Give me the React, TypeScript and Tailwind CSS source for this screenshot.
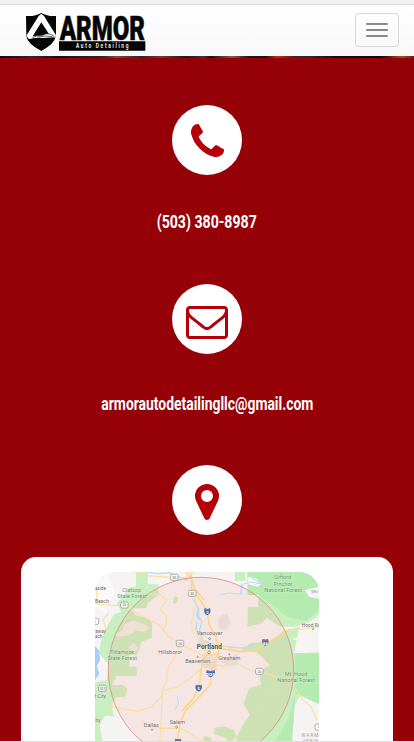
import React from "react";

function Logo() {
  return (
    <svg className="ml-[26px] h-[38px] w-[120px]" viewBox="78 38 360 114" aria-label="Armor Auto Detailing">
      <path d="M78 47Q105 49 124 38Q143 49 168 47V105Q164 132 124 151Q83 132 79 108Z" fill="#050505" />
      <path d="M116 47L124 40L132 47L169 106L160 117L124 114L88 118L79 106Z" fill="#fff" />
      <path d="M124 66L147 101Q137 98 129 105L98 108Z" fill="#050505" />
      <path d="M86 117Q104 111 128 113L164 111Q158 134 124 151Q96 138 86 117Z" fill="#050505" />
      <path d="M97 112Q109 105 125 106Q140 96 156 104L163 108M113 110Q135 105 158 109" stroke="#222" strokeWidth="2" fill="none" />
      <g fontFamily="Roboto, sans-serif" fontWeight="900">
        <text x="179" y="118" fontSize="97" textLength="256" lengthAdjust="spacingAndGlyphs" fill="#050505" stroke="#050505" strokeWidth="1.5">ARMOR</text>
        <path d="M177 123H436V151H177Z" fill="#050505" />
        <g transform="translate(228 144) scale(.65 1)">
          <text fontSize="22" fontWeight="600" textLength="242" fill="#fff">Auto Detailing</text>
        </g>
      </g>
    </svg>
  );
}

function Navbar() {
  return (
    <header>
      <div className="h-1 bg-[#f1f1f1]" />
      <nav className="flex h-[52px] items-start justify-between border-t border-[#dedede] bg-gradient-to-b from-white to-[#f8f8f8] pr-[15px] pt-2">
        <Logo />
        <button aria-label="Toggle navigation" className="flex h-[34px] w-11 flex-col items-center justify-center gap-1 rounded border border-[#d8d8d8]">
          <span className="h-0.5 w-[22px] rounded-[1px] bg-[#888]" />
          <span className="h-0.5 w-[22px] rounded-[1px] bg-[#888]" />
          <span className="h-0.5 w-[22px] rounded-[1px] bg-[#888]" />
        </button>
      </nav>
      <div className="h-0.5 bg-[linear-gradient(90deg,#150c10_0%,#34242a_8%,#171217_14%,#30262c_25%,#73503c_28%,#292329_34%,#6d3c2d_39%,#1b171b_45%,#423738_49%,#141316_51%,#85594d_56%,#1c1a1d_60%,#171217_64%,#b83116_67%,#431f20_71%,#28282c_75%,#100f12_81%,#0d0c0e_92%,#b04924_97%,#512520_100%)]" />
    </header>
  );
}

function Circle({ children }: { children: React.ReactNode }) {
  return <div className="flex size-[70px] items-center justify-center rounded-full bg-white text-[#b50009]">{children}</div>;
}

type Point = [number, number];

function Shield({ at, label }: { at: Point; label: string }) {
  return (
    <g transform={`translate(${at[0]} ${at[1]})`}>
      <path d="M-8 -10Q0 -6 8 -10Q14 4 0 11Q-14 4 -8 -10Z" fill="#426dad" />
      <path d="M-8 -10Q0 -6 8 -10L9 -5H-9Z" fill="#b76377" />
      <text y="7" textAnchor="middle" fontSize="12" fontWeight="700" fill="#fff">{label}</text>
    </g>
  );
}

function Route({ at, label }: { at: Point; label: string }) {
  return (
    <g transform={`translate(${at[0]} ${at[1]})`}>
      <rect x="-11" y="-9" width="22" height="18" rx="4" fill="#fff" stroke="#888" strokeWidth="2" />
      <text y="4" textAnchor="middle" fontSize="11" fill="#555">{label}</text>
    </g>
  );
}

function ServiceMap() {
  return (
    <svg className="h-[170px] w-56 rounded-t-[20px]" viewBox="285 81 672 510" aria-label="Service area around Portland">
      <rect x="285" y="81" width="672" height="510" fill="#f5f4f3" />
      <g fill="#c8efc0">
        <path d="M408 81H443V118H475V150L440 177V190H390L368 207L350 174L371 155L388 127H408Z" />
        <path d="M342 208L390 190L408 211L440 220L456 235V278L425 290L417 315L410 330H388V365H410V393H350L335 420H370L382 432L375 457H347L335 487L344 515L316 511L299 540L307 591H285V412L320 405L326 360L297 324L306 275L322 242Z" />
        <path d="M704 81H736V107H704Z" />
        <path d="M742 81H957V210L928 230L887 245H842L800 219L786 235L742 245L744 186H775V150H743Z" />
        <path d="M850 258L898 247L882 325L957 322V477L900 450L884 484L876 591H706L723 548L750 509L730 478L747 430L783 419L777 378L809 362L793 343L770 322L720 318L752 294L812 290Z" />
        <path d="M523 153L535 158L527 177L518 173Z" />
        <path d="M643 549L672 544L700 553L711 575L691 591L670 576L642 568ZM612 572L635 580L632 591H610Z" />
      </g>
      <g fill="#b5ebb0">
        <path d="M742 81H957V195L920 228L863 217L820 182L775 150H743Z" />
        <path d="M886 325H957V477L886 445ZM886 445L876 591H824L864 525Z" />
      </g>
      <path d="M743 95L768 100L785 118L772 125L743 118Z" fill="#f5f4f3" />
      <path d="M957 125L915 135L926 155L957 162Z" fill="#f5f4f3" />
      <path d="M285 302L298 319L300 347L290 362L298 386L285 405Z" fill="#a6cff4" />
      <path d="M285 83H323L345 145L320 177L320 204L285 185Z" fill="#fafafa" />
      <path d="M878 283L920 259L944 278L932 322H886L910 290Z" fill="#f6f5f4" />
      <g fill="#f6ebe6" opacity=".85">
        <path d="M371 238L400 226L431 236L451 248L433 260L408 257L382 273L367 259ZM345 266L365 257L380 271L354 277ZM383 306L402 294L416 310L401 320Z" />
      </g>
      <g fill="none" stroke="#dfe8c9" strokeWidth="1.5">
        <path d="M762 190L800 200L785 228M821 183L830 211L858 230M792 360L828 382L811 403L850 424M755 441L789 462L805 439L855 450M748 493L797 502L782 532L840 528M768 545L810 565L790 581" />
      </g>
      <path d="M655 217L682 205L692 236L677 255L655 250ZM596 282L625 287L617 318L597 305ZM662 349L711 328L717 360L680 364ZM608 335L650 335V379L610 365Z" fill="#e9e6e6" />
      <circle cx="603" cy="375" r="278" fill="#ff7055" fillOpacity=".1" />
      <g fill="none" strokeLinejoin="round" strokeLinecap="round">
        <g stroke="#b9dbf2">
          <path d="M444 81L471 86L508 83L542 98L562 105M578 161L595 188L596 213L606 230L599 255L608 287L640 298L676 305L724 309L765 302" strokeWidth="4" />
          <path d="M590 231L588 254L602 269M596 191L590 211L597 223" strokeWidth="5" />
          <path d="M662 149L685 144L724 148L728 118L755 111L793 119M724 119L722 149M757 100L791 119M532 456L536 474L526 493M876 459L869 474L865 482M886 431L892 438" strokeWidth="3" />
        </g>
        <g stroke="#f9dfa0" strokeWidth="3.5">
          <path d="M401 81L444 92L507 97L530 104L568 95L583 81M446 147L478 147L501 166L480 193L499 212L499 234L490 259M290 127L291 178L319 180L388 184L405 202L447 224L478 239L503 272L550 302L602 327M325 205L310 223L321 267M581 145L590 174L583 201L575 228L577 256L599 280L621 301L609 331" />
          <path d="M649 284L665 303L720 318L767 316L805 292L867 256L912 251L957 247M643 330L691 341L716 358L754 378L813 389L839 401M886 431L909 466L933 485L950 523M324 480L363 491L413 499L456 485L482 457L488 437L530 427L566 404L602 372M537 302L526 333L505 363L501 405L487 437L484 506L480 591M427 530L446 548L543 549L590 578L620 591" />
        </g>
        <g stroke="#f9d68c" strokeWidth="5">
          <path d="M557 81L577 106L573 129L601 166L622 199L627 239L648 276L650 298L628 318L607 350L602 386L598 426M570 81L582 129L611 163M610 298L649 309L721 320L773 313L805 293L867 254M650 298L657 320L646 350L632 386L632 418L598 456L557 496L540 536L532 591M607 331L657 328M635 349L616 367M596 426L580 460L547 497" />
        </g>
        <path d="M530 551H480M651 360L673 365L686 346M605 372L604 338" stroke="#f9d68c" strokeWidth="3" />
      </g>
      <circle cx="603" cy="375" r="278" fill="none" stroke="#df8c8c" strokeWidth="2.5" />
      <Shield at={[622, 200]} label="5" />
      <Shield at={[796, 292]} label="84" />
      <g transform="translate(632 386) scale(1.4 1)"><Shield at={[0, 0]} label="205" /></g>
      <Shield at={[596, 429]} label="5" />
      <Shield at={[534, 591]} label="" />
      <Route at={[523, 97]} label="30" />
      <Route at={[577, 145]} label="30" />
      <Route at={[373, 180]} label="26" />
      <Route at={[540, 295]} label="26" />
      <Route at={[778, 379]} label="26" />
      <Route at={[307, 430]} label="101" />
      <Route at={[285, 229]} label="1" />
      <Route at={[956, 546]} label="2" />
      <g fontFamily="Roboto, sans-serif" fontSize="16.5" textAnchor="middle" fill="#6c6869" stroke="#fff" strokeOpacity=".5" strokeWidth="2" paintOrder="stroke">
        <g fill="#5e9562">
          <text x="395" y="141">Clatsop</text><text x="396" y="160">State Forest</text>
          <text x="848" y="103">Gifford</text><text x="849" y="122">Pinchot</text><text x="849" y="141">National Forest</text>
          <text x="366" y="327">Tillamook</text><text x="367" y="346">State Forest</text>
          <text x="888" y="392">Mt. Hood</text><text x="888" y="411">National Forest</text>
        </g>
        <text x="629" y="271">Vancouver</text>
        <text x="628" y="313" fontSize="19.5" fontWeight="700" fill="#555">Portland</text>
        <text x="508" y="327">Hillsboro</text><text x="593" y="353">Beaverton</text><text x="688" y="346">Gresham</text>
        <text x="532" y="536">Salem</text><text x="454" y="547">Dallas</text>
        <text x="301" y="135" fontSize="14">aside</text><text x="306" y="174" fontSize="15">Beach</text><text x="302" y="264" fontSize="14">away</text><text x="296" y="280" fontSize="14">ach</text>
        <text x="301" y="459" fontSize="14.5">t City</text><text x="293" y="532" fontSize="14.5">ity</text><text x="931" y="245" fontSize="14.5">Hood Ri</text><text x="944" y="143" fontSize="12" fill="#888">Whi</text>
        <text x="931" y="575" fontSize="14" letterSpacing="3" fill="#999">WARM</text><text x="932" y="591" fontSize="13" letterSpacing="2" fill="#999">SPRIN</text>
      </g>
      <g fill="#fff" stroke="#777" strokeWidth="2">
        <circle cx="629" cy="281" r="3" /><circle cx="627" cy="322" r="4" /><circle cx="593" cy="336" r="2" /><circle cx="688" cy="328" r="2" />
        <circle cx="530" cy="546" r="3" /><circle cx="456" cy="554" r="2" /><circle cx="543" cy="321" r="1.5" /><circle cx="939" cy="252" r="1.5" />
      </g>
    </svg>
  );
}

export default function App() {
  return (
    <div className="flex h-[742px] w-full flex-col overflow-hidden bg-[#960107] font-['Roboto',sans-serif]">
      <Navbar />
      <main className="flex flex-1 flex-col items-center pt-[47px]">
        <Circle>
          <svg className="mt-px size-[33px]" viewBox="0 0 1408 1408" fill="currentColor">
            <path d="M1408 1112q0 27-10 70.5t-21 68.5q-21 50-122 106-94 51-186 51-27 0-53-3.5t-57.5-12.5-47-14.5-55.5-20.5-49-18q-98-35-175-83-127-79-264-216t-216-264q-48-77-83-175-3-9-18-49t-20.5-55.5-14.5-47-12.5-57.5-3.5-53q0-92 51-186 56-101 106-122 25-11 68.5-21t70.5-10q14 0 21 3 18 6 53 76 11 19 30 54t35 63.5 31 53.5q3 4 17.5 25t21.5 35.5 7 28.5q0 20-28.5 50t-62 55-62 53-28.5 46q0 9 5 22.5t8.5 20.5 14 24 11.5 19q76 137 174 235t235 174q2 1 19 11.5t24 14 20.5 8.5 22.5 5q18 0 46-28.5t53-62 55-62 50-28.5q14 0 28.5 7t35.5 21.5 25 17.5q25 15 53.5 31t63.5 35 54 30q70 35 76 53 3 7 3 21z" />
          </svg>
        </Circle>
        <a className="mt-[35px] block h-6 scale-x-[0.785] whitespace-nowrap text-lg/6 font-bold text-white">(503) 380-8987</a>
        <div className="mt-[50px]">
          <Circle>
            <svg className="mt-[7px] h-[33px] w-[42px]" viewBox="0 256 1792 1408" fill="currentColor">
              <path d="M1664 1504v-768q-32 36-69 66-268 206-426 338-51 43-83 67t-86.5 48.5-102.5 24.5h-2q-48 0-102.5-24.5t-86.5-48.5-83-67q-158-132-426-338-37-30-69-66v768q0 13 9.5 22.5t22.5 9.5h1472q13 0 22.5-9.5t9.5-22.5zm0-1051v-24.5l-.5-13-3-12.5-5.5-9-9-7.5-14-2.5h-1472q-13 0-22.5 9.5t-9.5 22.5q0 168 147 284 193 152 401 317 6 5 35 29.5t46 37.5 44.5 31.5 50.5 27.5 43 9h2q20 0 43-9t50.5-27.5 44.5-31.5 46-37.5 35-29.5q208-165 401-317 54-43 100.5-115.5t46.5-131.5zm128-37v1088q0 66-47 113t-113 47h-1472q-66 0-113-47t-47-113v-1088q0-66 47-113t113-47h1472q66 0 113 47t47 113z" />
            </svg>
          </Circle>
        </div>
        <a className="mt-[38px] block h-6 scale-x-[0.772] whitespace-nowrap text-lg/6 font-bold text-white">armorautodetailingllc@gmail.com</a>
        <div className="mt-[49px]">
          <Circle>
            <svg className="mt-1 h-9 w-6" viewBox="0 128 1024 1536" fill="currentColor">
              <path d="M768 640q0-106-75-181t-181-75-181 75-75 181 75 181 181 75 181-75 75-181zm256 0q0 109-33 179l-364 774q-16 33-47.5 52t-67.5 19-67.5-19-46.5-52l-365-774q-33-70-33-179 0-212 150-362t362-150 362 150 150 362z" />
            </svg>
          </Circle>
        </div>
        <section className="mt-[22px] flex h-[184px] w-[372px] justify-center overflow-hidden rounded-t-[15px] bg-white pt-[15px]">
          <ServiceMap />
        </section>
      </main>
      <div className="h-px shrink-0 bg-[#dedede]" />
    </div>
  );
}
